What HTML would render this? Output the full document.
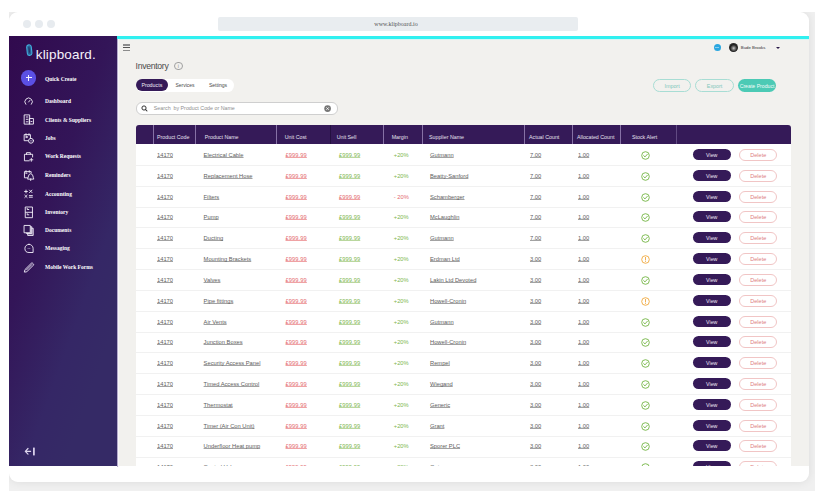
<!DOCTYPE html>
<html><head><meta charset="utf-8">
<style>
html,body{margin:0;padding:0;}
body{width:815px;height:491px;overflow:hidden;background:#fff;position:relative;font-family:"Liberation Sans",sans-serif;}
.win{position:absolute;left:9px;top:12px;width:800px;height:470px;background:#fff;border-radius:9px;overflow:hidden;}
.dot{position:absolute;top:7.6px;width:8px;height:8px;border-radius:50%;background:#e7ebef;}
.url{position:absolute;left:209px;top:5px;width:360px;height:13.8px;background:#e9edf0;border-radius:2px;font-family:"Liberation Serif",serif;font-size:6px;color:#555;text-align:center;line-height:14.6px;padding-right:4px;box-sizing:border-box;}
.side{position:absolute;left:0;top:24px;width:108px;height:430px;background:linear-gradient(110deg,#310a4e 0%,#331558 38%,#341d5e 50%,#352766 65%,#352a66 80%,#352a66 100%);}
.main{position:absolute;left:108px;top:24px;width:692px;height:430px;background:#f2f1ee;}
.cyan{position:absolute;left:0;top:0;width:692px;height:3px;background:#30f0f0;box-shadow:0 1px 0 #d2f8f6;}
.logo{position:absolute;left:26.8px;top:10.8px;font-size:13.5px;line-height:16px;color:#f6f2fb;letter-spacing:0.15px;}
.qc{position:absolute;left:11.8px;top:34.1px;width:15.6px;height:15.6px;border-radius:50%;background:#5b50e4;}
.qc:before{content:"";position:absolute;left:4.8px;top:7.35px;width:6px;height:0.9px;background:#f4f2ff;}
.qc:after{content:"";position:absolute;left:7.35px;top:4.8px;width:0.9px;height:6px;background:#f4f2ff;}
.sl{position:absolute;left:36px;height:10px;line-height:10px;font-family:"Liberation Serif",serif;font-weight:bold;font-size:5.5px;color:#fff;white-space:nowrap;}
.sic{position:absolute;left:15px;width:11px;height:11px;overflow:visible;}
.sic svg{overflow:visible;}
.sic svg{display:block;}
.abs{position:absolute;}
.thead{position:absolute;background:#351a58;border-radius:3px 3px 0 0;}
.hdiv{position:absolute;top:0;width:0.8px;height:100%;background:rgba(200,185,230,0.55);}
.hdiv.dark{background:rgba(20,5,40,0.5);}
.hdiv.mid{background:rgba(200,185,230,0.3);}
.thead .hdiv{}
.ht{position:absolute;font-size:5.3px;color:#e6e0ef;white-space:nowrap;}
.tbody{position:absolute;background:#fff;overflow:hidden;}
.row{position:absolute;left:0;width:100%;}
.rline{position:absolute;left:0;right:0;height:0.8px;background:#f1f1f1;}
.c{position:absolute;top:1px;height:100%;line-height:20.82px;font-size:5.75px;color:#5e5e5e;white-space:nowrap;}
.u{text-decoration:underline;text-decoration-skip-ink:none;text-decoration-thickness:0.5px;text-underline-offset:0.4px;text-decoration-color:rgba(70,70,70,0.5);}
.u.red,.u.sr{text-decoration-color:rgba(226,85,90,0.55);}
.u.sg{text-decoration-color:rgba(128,182,78,0.55);}
.red{color:#e46a6e;}
.sg{color:#80b64e;}
.sr{color:#e46a6e;}
.mg{color:#80b64e;}
.mr{color:#e46a6e;}
.ic{position:absolute;top:6.6px;width:9px;height:9px;}
.ic svg{display:block;}
.bview{position:absolute;top:4.9px;width:37.5px;height:11.6px;border-radius:6px;background:#351a58;color:#ece6f4;font-size:5.3px;line-height:12.4px;text-align:center;}
.bdel{position:absolute;top:4.7px;width:37.6px;height:12.2px;box-sizing:border-box;border-radius:6.1px;border:0.9px solid #f1c5c5;color:#dc7b80;font-size:5.5px;line-height:11px;text-align:center;background:#fff;padding-left:1px;}
</style></head><body>
<div class="abs" style="left:9px;top:12px;width:806px;height:479px;background:#f0f0f0;overflow:hidden"><div class="abs" style="left:0;top:0;width:800px;height:470px;border-radius:9px;box-shadow:0 0 10px rgba(0,0,0,0.085)"></div></div>
<div class="win">
  <div class="dot" style="left:14px"></div>
  <div class="dot" style="left:26px"></div>
  <div class="dot" style="left:38px"></div>
  <div class="url">www.klipboard.io</div>
  <div class="side">
    <svg class="abs" style="left:16.5px;top:8px" width="7" height="12" viewBox="0 0 7 12"><rect x="1" y="0.8" width="4.6" height="10.6" rx="2.3" transform="rotate(-6 3.3 6)" fill="#2a5f96" stroke="#42aedb" stroke-width="1.1"/><path d="M3.2 3.2 V8.6" stroke="#1e2a60" stroke-width="0.9" transform="rotate(-6 3.3 6)"/></svg>
    <div class="logo">klipboard.</div>
    <div class="qc"></div>
    <div class="sl" style="top:37.8px">Quick Create</div>
<div class="sic" style="top:59.5px"><svg width="11" height="11" viewBox="0 0 22 22" fill="none" stroke="#f4f0fa" stroke-width="1.8" stroke-linecap="round" stroke-linejoin="round"><path d="M3.6 16.6 A7.5 7.5 0 1 1 14.8 16.6"/><path d="M9.2 12 L11.8 8.8"/></svg></div>
<div class="sl" style="top:60.0px">Dashboard</div>
<div class="sic" style="top:78.3px"><svg width="11" height="11" viewBox="0 0 22 22" fill="none" stroke="#f4f0fa" stroke-width="1.8" stroke-linecap="round" stroke-linejoin="round"><rect x="1.1" y="1.8" width="10.2" height="18.4"/><rect x="11.3" y="9" width="7.6" height="11.2"/><path d="M4.5 6h3.4M4.5 10.6h3.4M4.5 15.6h3.4M14 15h2"/></svg></div>
<div class="sl" style="top:78.8px">Clients &amp; Suppliers</div>
<div class="sic" style="top:96.69999999999999px"><svg width="11" height="11" viewBox="0 0 22 22" fill="none" stroke="#f4f0fa" stroke-width="1.8" stroke-linecap="round" stroke-linejoin="round"><rect x="1.1" y="3.2" width="11.8" height="12.2"/><path d="M4 1.4v3.2M10 1.4v3.2"/><path d="M3.8 6.3h3.4v3.2H3.8z" fill="#f4f0fa" stroke-width="0.6"/><circle cx="14" cy="15.6" r="4.9" fill="#321657"/><circle cx="14" cy="15.6" r="1.3" fill="#f4f0fa" stroke="none"/></svg></div>
<div class="sl" style="top:97.19999999999999px">Jobs</div>
<div class="sic" style="top:114.5px"><svg width="11" height="11" viewBox="0 0 22 22" fill="none" stroke="#f4f0fa" stroke-width="1.8" stroke-linecap="round" stroke-linejoin="round"><path d="M10.5 19.6H0.9V6.6H17.2V12"/><path d="M5 6.6V3.3h7.6v3.3"/><path d="M14.6 14.6v6M11.6 17.6h6"/></svg></div>
<div class="sl" style="top:115.0px">Work Requests</div>
<div class="sic" style="top:133.5px"><svg width="11" height="11" viewBox="0 0 22 22" fill="none" stroke="#f4f0fa" stroke-width="1.8" stroke-linecap="round" stroke-linejoin="round"><path d="M7 15.6H0.9V3.2h13.4v2.5"/><path d="M4 1.4v3.2M10.5 1.4v3.2M3.5 6.5h2.5"/><path d="M7.6 17.6 C8.8 15.8 8.2 7.4 13.4 7.4 C18.6 7.4 18 15.8 19.2 17.6 Z" fill="#321657"/><path d="M13.4 17.6v3.4"/></svg></div>
<div class="sl" style="top:134.0px">Reminders</div>
<div class="sic" style="top:152.5px"><svg width="11" height="11" viewBox="0 0 22 22" fill="none" stroke="#f4f0fa" stroke-width="1.8" stroke-linecap="round" stroke-linejoin="round"><path d="M1.2 5h5.6M4 2.2v5.6M11 2.2l5 5M16 2.2l-5 5M1.6 12.4l4.6 4.6M6.2 12.4l-4.6 4.6M10.6 13.2h6.2M10.6 16.4h6.2"/></svg></div>
<div class="sl" style="top:153.0px">Accounting</div>
<div class="sic" style="top:170.5px"><svg width="11" height="11" viewBox="0 0 22 22" fill="none" stroke="#f4f0fa" stroke-width="1.8" stroke-linecap="round" stroke-linejoin="round"><rect x="3.3" y="0" width="13.6" height="21.4"/><path d="M3.3 10.6h13.6M6.4 2.8v2.2h3.2M6.4 13.4v2.2h3.2"/></svg></div>
<div class="sl" style="top:171.0px">Inventory</div>
<div class="sic" style="top:188.5px"><svg width="11" height="11" viewBox="0 0 22 22" fill="none" stroke="#f4f0fa" stroke-width="1.8" stroke-linecap="round" stroke-linejoin="round"><path d="M12.8 3.5h2.8v13.4H4.6v-1.8" fill="rgba(244,240,250,0.35)"/><path d="M15.6 6.5h2.8v14.4H7.4v-4" fill="rgba(244,240,250,0.3)"/><rect x="0.9" y="0.9" width="11.6" height="14.6" fill="#321657"/></svg></div>
<div class="sl" style="top:189.0px">Documents</div>
<div class="sic" style="top:206.5px"><svg width="11" height="11" viewBox="0 0 22 22" fill="none" stroke="#f4f0fa" stroke-width="1.8" stroke-linecap="round" stroke-linejoin="round"><path d="M10 2.6 A8.2 8.2 0 1 0 10 19 L18.2 19 L18.2 10.8 A8.2 8.2 0 0 0 10 2.6 Z"/><path d="M8.2 11h.05M11.6 11h.05" stroke-width="1.3"/></svg></div>
<div class="sl" style="top:207.0px">Messaging</div>
<div class="sic" style="top:225.5px"><svg width="11" height="11" viewBox="0 0 22 22" fill="none" stroke="#f4f0fa" stroke-width="1.8" stroke-linecap="round" stroke-linejoin="round"><path d="M0.8 19.4 L1.9 15.2 L14.6 2.5 A2 2 0 0 1 17.4 2.5 L18.6 3.7 A2 2 0 0 1 18.6 6.5 L5.9 19.2 Z"/><path d="M5 15.8 L15.8 5"/></svg></div>
<div class="sl" style="top:226.0px">Mobile Work Forms</div>
    <svg class="abs" style="left:14.8px;top:410.8px" width="12" height="10" viewBox="0 0 12 10"><path d="M4 1.5 L1.3 4.3 L4 7.1 M1.5 4.3 H6.6" fill="none" stroke="#ddd5ee" stroke-width="1.2" stroke-linecap="round" stroke-linejoin="round"/><rect x="9" y="0.6" width="1.8" height="7.8" fill="#d6cde8"/></svg>
  </div>
  <div class="main">
    <div class="cyan"></div>
    <div class="abs" style="left:0;top:2.6px;width:1px;height:428px;background:#b4aacb"></div><div class="abs" style="left:1px;top:2.6px;width:1px;height:428px;background:#f7f6f9"></div>
  </div>
</div>
<!-- main content, absolute page coords -->
<div class="abs" style="left:122.8px;top:44.3px;width:7.4px;height:1.4px;background:#8c8c8c"></div>
<div class="abs" style="left:122.8px;top:47.1px;width:7.4px;height:1px;background:#555"></div>
<div class="abs" style="left:122.8px;top:49.5px;width:7.4px;height:1.4px;background:#8c8c8c"></div>

<div class="abs" style="left:135.6px;top:60px;font-size:8.7px;color:#4a4a4a;line-height:12px;letter-spacing:-0.32px">Inventory</div>
<div class="abs" style="left:174.2px;top:61.7px;width:6.4px;height:6.4px;border:0.7px solid #a0a0a0;border-radius:50%;font-size:5px;line-height:6px;text-align:center;color:#888">i</div>

<div class="abs" style="left:135.7px;top:78.9px;width:98.5px;height:12.8px;background:#fff;border-radius:6.4px"></div>
<div class="abs" style="left:135.7px;top:78.7px;width:32.3px;height:12.8px;background:#351a58;border-radius:6.4px;color:#f0ecf6;font-size:5.3px;line-height:13.4px;text-align:center">Products</div>
<div class="abs" style="left:175.5px;top:79px;font-size:4.95px;line-height:13.2px;color:#4a4a4a">Services</div>
<div class="abs" style="left:208.9px;top:79px;font-size:5.05px;line-height:13.2px;color:#4a4a4a">Settings</div>

<div class="abs" style="left:135.9px;top:102.2px;width:202px;height:12.9px;box-sizing:border-box;border:0.8px solid #cfcfcf;border-radius:6px;background:#fff"></div>
<svg class="abs" style="left:141.2px;top:105px" width="7" height="7" viewBox="0 0 14 14"><circle cx="6" cy="6" r="4.2" fill="none" stroke="#2a2a2a" stroke-width="1.9"/><path d="M9.2 9.2 L12 12" stroke="#2a2a2a" stroke-width="2.1" stroke-linecap="round"/></svg>
<div class="abs" style="left:153.8px;top:102.9px;font-size:5.3px;line-height:11.8px;color:#8e8e8e;white-space:nowrap">Search&nbsp; by Product Code or Name</div>
<svg class="abs" style="left:324px;top:104.9px" width="7.2" height="7.2" viewBox="0 0 14 14"><circle cx="7" cy="7" r="6.5" fill="#777"/><path d="M4.6 4.6 L9.4 9.4 M9.4 4.6 L4.6 9.4" stroke="#fff" stroke-width="1.6"/></svg>

<div class="abs" style="left:713.5px;top:43.7px;width:7.4px;height:7.4px;border-radius:50%;background:#2aa7e0"></div><div class="abs" style="left:715.4px;top:46.9px;width:3.6px;height:0.8px;background:rgba(255,255,255,0.45)"></div>
<div class="abs" style="left:729px;top:43.1px;width:8.8px;height:8.8px;border-radius:50%;background:radial-gradient(circle at 52% 58%,#ccc 0,#777 22%,#1e1e1e 50%,#3a3a3a 80%,#777 100%)"></div>
<div class="abs" style="left:740.8px;top:45.3px;font-size:4.3px;line-height:6px;color:#2e2e2e;white-space:nowrap">Bude Brooks</div>
<div class="abs" style="left:776px;top:46.8px;width:0;height:0;border-left:2.2px solid transparent;border-right:2.2px solid transparent;border-top:2.8px solid #2a1a48"></div>

<div class="abs" style="left:652.7px;top:79.3px;width:38.7px;height:12.4px;box-sizing:border-box;border:0.8px solid #a8ddd4;border-radius:6.5px;color:#7fc7bb;font-size:5.4px;line-height:12px;text-align:center">Import</div>
<div class="abs" style="left:695.2px;top:79.3px;width:38.8px;height:12.4px;box-sizing:border-box;border:0.8px solid #a8ddd4;border-radius:6.5px;color:#7fc7bb;font-size:5.4px;line-height:12px;text-align:center">Export</div>
<div class="abs" style="left:737.8px;top:79.3px;width:38.6px;height:12.4px;border-radius:6.5px;background:#4ccab5;color:#f2fbf9;font-size:5.2px;line-height:14.2px;text-align:center;white-space:nowrap">Create Product</div>

<div class="thead" style="left:136.0px;top:125.0px;width:654.8px;height:19.0px">
<div class="hdiv" style="left:17.19999999999999px"></div>
<div class="hdiv" style="left:59.400000000000006px"></div>
<div class="hdiv" style="left:140.2px"></div>
<div class="hdiv dark" style="left:193.60000000000002px"></div>
<div class="hdiv" style="left:247.2px"></div>
<div class="hdiv" style="left:285.8px"></div>
<div class="hdiv" style="left:388.29999999999995px"></div>
<div class="hdiv" style="left:436.29999999999995px"></div>
<div class="hdiv" style="left:484.1px"></div>
<div class="hdiv mid" style="left:540.4px"></div>
</div>
<div class="ht" style="left:157.0px;top:127.8px;height:19.0px;line-height:19.0px">Product Code</div>
<div class="ht" style="left:204.7px;top:127.8px;height:19.0px;line-height:19.0px">Product Name</div>
<div class="ht" style="left:284.8px;top:127.8px;height:19.0px;line-height:19.0px">Unit Cost</div>
<div class="ht" style="left:336.7px;top:127.8px;height:19.0px;line-height:19.0px">Unit Sell</div>
<div class="ht" style="left:391.7px;top:127.8px;height:19.0px;line-height:19.0px">Margin</div>
<div class="ht" style="left:429.0px;top:127.8px;height:19.0px;line-height:19.0px">Supplier Name</div>
<div class="ht" style="left:529.0px;top:127.8px;height:19.0px;line-height:19.0px">Actual Count</div>
<div class="ht" style="left:577.0px;top:127.8px;height:19.0px;line-height:19.0px">Allocated Count</div>
<div class="ht" style="left:632.0px;top:127.8px;height:19.0px;line-height:19.0px">Stock Alert</div>
<div class="tbody" style="left:136.0px;top:144.0px;width:654.8px;height:322.0px">
<div class="rline" style="top:21.02px"></div>
<div class="row" style="top:0px;height:20.82px"><span class="c u" style="left:21.0px">14170</span><span class="c u" style="left:67.6px">Electrical Cable</span><span class="c u red" style="left:149.5px;letter-spacing:0.08px">&pound;999.99</span><span class="c u sg" style="left:202.89999999999998px;letter-spacing:0.08px">&pound;999.99</span><span class="c mg" style="left:257.8px">+20%</span><span class="c u" style="left:294.0px">Gutmann</span><span class="c u" style="left:394.0px">7.00</span><span class="c u" style="left:442.0px">1.00</span><span class="ic" style="left:505.0px"><svg width="9" height="9" viewBox="0 0 18 18"><circle cx="9" cy="9" r="7.6" fill="none" stroke="#74b544" stroke-width="1.8"/><path d="M5.3 9.2 L8 11.8 L12.8 6.4" fill="none" stroke="#74b544" stroke-width="1.8" stroke-linecap="round" stroke-linejoin="round"/></svg></span><span class="bview" style="left:557.0px">View</span><span class="bdel" style="left:603.0px">Delete</span></div>
<div class="rline" style="top:41.84px"></div>
<div class="row" style="top:21px;height:20.82px"><span class="c u" style="left:21.0px">14170</span><span class="c u" style="left:67.6px">Replacement Hose</span><span class="c u red" style="left:149.5px;letter-spacing:0.08px">&pound;999.99</span><span class="c u sg" style="left:202.89999999999998px;letter-spacing:0.08px">&pound;999.99</span><span class="c mg" style="left:257.8px">+20%</span><span class="c u" style="left:294.0px">Beatty-Sanford</span><span class="c u" style="left:394.0px">7.00</span><span class="c u" style="left:442.0px">1.00</span><span class="ic" style="left:505.0px"><svg width="9" height="9" viewBox="0 0 18 18"><circle cx="9" cy="9" r="7.6" fill="none" stroke="#74b544" stroke-width="1.8"/><path d="M5.3 9.2 L8 11.8 L12.8 6.4" fill="none" stroke="#74b544" stroke-width="1.8" stroke-linecap="round" stroke-linejoin="round"/></svg></span><span class="bview" style="left:557.0px">View</span><span class="bdel" style="left:603.0px">Delete</span></div>
<div class="rline" style="top:62.66px"></div>
<div class="row" style="top:42px;height:20.82px"><span class="c u" style="left:21.0px">14170</span><span class="c u" style="left:67.6px">Filters</span><span class="c u red" style="left:149.5px;letter-spacing:0.08px">&pound;999.99</span><span class="c u sr" style="left:202.89999999999998px;letter-spacing:0.08px">&pound;999.99</span><span class="c mr" style="left:257.8px">- 20%</span><span class="c u" style="left:294.0px">Schamberger</span><span class="c u" style="left:394.0px">7.00</span><span class="c u" style="left:442.0px">1.00</span><span class="ic" style="left:505.0px"><svg width="9" height="9" viewBox="0 0 18 18"><circle cx="9" cy="9" r="7.6" fill="none" stroke="#74b544" stroke-width="1.8"/><path d="M5.3 9.2 L8 11.8 L12.8 6.4" fill="none" stroke="#74b544" stroke-width="1.8" stroke-linecap="round" stroke-linejoin="round"/></svg></span><span class="bview" style="left:557.0px">View</span><span class="bdel" style="left:603.0px">Delete</span></div>
<div class="rline" style="top:83.48px"></div>
<div class="row" style="top:62px;height:20.82px"><span class="c u" style="left:21.0px">14170</span><span class="c u" style="left:67.6px">Pump</span><span class="c u red" style="left:149.5px;letter-spacing:0.08px">&pound;999.99</span><span class="c u sg" style="left:202.89999999999998px;letter-spacing:0.08px">&pound;999.99</span><span class="c mg" style="left:257.8px">+20%</span><span class="c u" style="left:294.0px">McLaughlin</span><span class="c u" style="left:394.0px">7.00</span><span class="c u" style="left:442.0px">1.00</span><span class="ic" style="left:505.0px"><svg width="9" height="9" viewBox="0 0 18 18"><circle cx="9" cy="9" r="7.6" fill="none" stroke="#74b544" stroke-width="1.8"/><path d="M5.3 9.2 L8 11.8 L12.8 6.4" fill="none" stroke="#74b544" stroke-width="1.8" stroke-linecap="round" stroke-linejoin="round"/></svg></span><span class="bview" style="left:557.0px">View</span><span class="bdel" style="left:603.0px">Delete</span></div>
<div class="rline" style="top:104.30px"></div>
<div class="row" style="top:83px;height:20.82px"><span class="c u" style="left:21.0px">14170</span><span class="c u" style="left:67.6px">Ducting</span><span class="c u red" style="left:149.5px;letter-spacing:0.08px">&pound;999.99</span><span class="c u sg" style="left:202.89999999999998px;letter-spacing:0.08px">&pound;999.99</span><span class="c mg" style="left:257.8px">+20%</span><span class="c u" style="left:294.0px">Gutmann</span><span class="c u" style="left:394.0px">7.00</span><span class="c u" style="left:442.0px">1.00</span><span class="ic" style="left:505.0px"><svg width="9" height="9" viewBox="0 0 18 18"><circle cx="9" cy="9" r="7.6" fill="none" stroke="#74b544" stroke-width="1.8"/><path d="M5.3 9.2 L8 11.8 L12.8 6.4" fill="none" stroke="#74b544" stroke-width="1.8" stroke-linecap="round" stroke-linejoin="round"/></svg></span><span class="bview" style="left:557.0px">View</span><span class="bdel" style="left:603.0px">Delete</span></div>
<div class="rline" style="top:125.12px"></div>
<div class="row" style="top:104px;height:20.82px"><span class="c u" style="left:21.0px">14170</span><span class="c u" style="left:67.6px">Mounting Brackets</span><span class="c u red" style="left:149.5px;letter-spacing:0.08px">&pound;999.99</span><span class="c u sg" style="left:202.89999999999998px;letter-spacing:0.08px">&pound;999.99</span><span class="c mg" style="left:257.8px">+20%</span><span class="c u" style="left:294.0px">Erdman Ltd</span><span class="c u" style="left:394.0px">3.00</span><span class="c u" style="left:442.0px">1.00</span><span class="ic" style="left:505.0px"><svg width="9" height="9" viewBox="0 0 18 18"><circle cx="9" cy="9" r="7.6" fill="none" stroke="#f0a83c" stroke-width="1.8"/><path d="M9 4.8 V10" fill="none" stroke="#f0a83c" stroke-width="1.8" stroke-linecap="round"/><circle cx="9" cy="12.8" r="1" fill="#f0a83c"/></svg></span><span class="bview" style="left:557.0px">View</span><span class="bdel" style="left:603.0px">Delete</span></div>
<div class="rline" style="top:145.94px"></div>
<div class="row" style="top:125px;height:20.82px"><span class="c u" style="left:21.0px">14170</span><span class="c u" style="left:67.6px">Valves</span><span class="c u red" style="left:149.5px;letter-spacing:0.08px">&pound;999.99</span><span class="c u sg" style="left:202.89999999999998px;letter-spacing:0.08px">&pound;999.99</span><span class="c mg" style="left:257.8px">+20%</span><span class="c u" style="left:294.0px">Lakin Ltd Devoted</span><span class="c u" style="left:394.0px">3.00</span><span class="c u" style="left:442.0px">1.00</span><span class="ic" style="left:505.0px"><svg width="9" height="9" viewBox="0 0 18 18"><circle cx="9" cy="9" r="7.6" fill="none" stroke="#74b544" stroke-width="1.8"/><path d="M5.3 9.2 L8 11.8 L12.8 6.4" fill="none" stroke="#74b544" stroke-width="1.8" stroke-linecap="round" stroke-linejoin="round"/></svg></span><span class="bview" style="left:557.0px">View</span><span class="bdel" style="left:603.0px">Delete</span></div>
<div class="rline" style="top:166.76px"></div>
<div class="row" style="top:146px;height:20.82px"><span class="c u" style="left:21.0px">14170</span><span class="c u" style="left:67.6px">Pipe fittings</span><span class="c u red" style="left:149.5px;letter-spacing:0.08px">&pound;999.99</span><span class="c u sg" style="left:202.89999999999998px;letter-spacing:0.08px">&pound;999.99</span><span class="c mg" style="left:257.8px">+20%</span><span class="c u" style="left:294.0px">Howell-Cronin</span><span class="c u" style="left:394.0px">3.00</span><span class="c u" style="left:442.0px">1.00</span><span class="ic" style="left:505.0px"><svg width="9" height="9" viewBox="0 0 18 18"><circle cx="9" cy="9" r="7.6" fill="none" stroke="#f0a83c" stroke-width="1.8"/><path d="M9 4.8 V10" fill="none" stroke="#f0a83c" stroke-width="1.8" stroke-linecap="round"/><circle cx="9" cy="12.8" r="1" fill="#f0a83c"/></svg></span><span class="bview" style="left:557.0px">View</span><span class="bdel" style="left:603.0px">Delete</span></div>
<div class="rline" style="top:187.58px"></div>
<div class="row" style="top:167px;height:20.82px"><span class="c u" style="left:21.0px">14170</span><span class="c u" style="left:67.6px">Air Vents</span><span class="c u red" style="left:149.5px;letter-spacing:0.08px">&pound;999.99</span><span class="c u sg" style="left:202.89999999999998px;letter-spacing:0.08px">&pound;999.99</span><span class="c mg" style="left:257.8px">+20%</span><span class="c u" style="left:294.0px">Gutmann</span><span class="c u" style="left:394.0px">3.00</span><span class="c u" style="left:442.0px">1.00</span><span class="ic" style="left:505.0px"><svg width="9" height="9" viewBox="0 0 18 18"><circle cx="9" cy="9" r="7.6" fill="none" stroke="#74b544" stroke-width="1.8"/><path d="M5.3 9.2 L8 11.8 L12.8 6.4" fill="none" stroke="#74b544" stroke-width="1.8" stroke-linecap="round" stroke-linejoin="round"/></svg></span><span class="bview" style="left:557.0px">View</span><span class="bdel" style="left:603.0px">Delete</span></div>
<div class="rline" style="top:208.40px"></div>
<div class="row" style="top:187px;height:20.82px"><span class="c u" style="left:21.0px">14170</span><span class="c u" style="left:67.6px">Junction Boxes</span><span class="c u red" style="left:149.5px;letter-spacing:0.08px">&pound;999.99</span><span class="c u sg" style="left:202.89999999999998px;letter-spacing:0.08px">&pound;999.99</span><span class="c mg" style="left:257.8px">+20%</span><span class="c u" style="left:294.0px">Howell-Cronin</span><span class="c u" style="left:394.0px">3.00</span><span class="c u" style="left:442.0px">1.00</span><span class="ic" style="left:505.0px"><svg width="9" height="9" viewBox="0 0 18 18"><circle cx="9" cy="9" r="7.6" fill="none" stroke="#74b544" stroke-width="1.8"/><path d="M5.3 9.2 L8 11.8 L12.8 6.4" fill="none" stroke="#74b544" stroke-width="1.8" stroke-linecap="round" stroke-linejoin="round"/></svg></span><span class="bview" style="left:557.0px">View</span><span class="bdel" style="left:603.0px">Delete</span></div>
<div class="rline" style="top:229.22px"></div>
<div class="row" style="top:208px;height:20.82px"><span class="c u" style="left:21.0px">14170</span><span class="c u" style="left:67.6px">Security Access Panel</span><span class="c u red" style="left:149.5px;letter-spacing:0.08px">&pound;999.99</span><span class="c u sg" style="left:202.89999999999998px;letter-spacing:0.08px">&pound;999.99</span><span class="c mg" style="left:257.8px">+20%</span><span class="c u" style="left:294.0px">Rempel</span><span class="c u" style="left:394.0px">3.00</span><span class="c u" style="left:442.0px">1.00</span><span class="ic" style="left:505.0px"><svg width="9" height="9" viewBox="0 0 18 18"><circle cx="9" cy="9" r="7.6" fill="none" stroke="#74b544" stroke-width="1.8"/><path d="M5.3 9.2 L8 11.8 L12.8 6.4" fill="none" stroke="#74b544" stroke-width="1.8" stroke-linecap="round" stroke-linejoin="round"/></svg></span><span class="bview" style="left:557.0px">View</span><span class="bdel" style="left:603.0px">Delete</span></div>
<div class="rline" style="top:250.04px"></div>
<div class="row" style="top:229px;height:20.82px"><span class="c u" style="left:21.0px">14170</span><span class="c u" style="left:67.6px">Timed Access Control</span><span class="c u red" style="left:149.5px;letter-spacing:0.08px">&pound;999.99</span><span class="c u sg" style="left:202.89999999999998px;letter-spacing:0.08px">&pound;999.99</span><span class="c mg" style="left:257.8px">+20%</span><span class="c u" style="left:294.0px">Wiegand</span><span class="c u" style="left:394.0px">3.00</span><span class="c u" style="left:442.0px">1.00</span><span class="ic" style="left:505.0px"><svg width="9" height="9" viewBox="0 0 18 18"><circle cx="9" cy="9" r="7.6" fill="none" stroke="#74b544" stroke-width="1.8"/><path d="M5.3 9.2 L8 11.8 L12.8 6.4" fill="none" stroke="#74b544" stroke-width="1.8" stroke-linecap="round" stroke-linejoin="round"/></svg></span><span class="bview" style="left:557.0px">View</span><span class="bdel" style="left:603.0px">Delete</span></div>
<div class="rline" style="top:270.86px"></div>
<div class="row" style="top:250px;height:20.82px"><span class="c u" style="left:21.0px">14170</span><span class="c u" style="left:67.6px">Thermostat</span><span class="c u red" style="left:149.5px;letter-spacing:0.08px">&pound;999.99</span><span class="c u sg" style="left:202.89999999999998px;letter-spacing:0.08px">&pound;999.99</span><span class="c mg" style="left:257.8px">+20%</span><span class="c u" style="left:294.0px">Generic</span><span class="c u" style="left:394.0px">3.00</span><span class="c u" style="left:442.0px">1.00</span><span class="ic" style="left:505.0px"><svg width="9" height="9" viewBox="0 0 18 18"><circle cx="9" cy="9" r="7.6" fill="none" stroke="#74b544" stroke-width="1.8"/><path d="M5.3 9.2 L8 11.8 L12.8 6.4" fill="none" stroke="#74b544" stroke-width="1.8" stroke-linecap="round" stroke-linejoin="round"/></svg></span><span class="bview" style="left:557.0px">View</span><span class="bdel" style="left:603.0px">Delete</span></div>
<div class="rline" style="top:291.68px"></div>
<div class="row" style="top:271px;height:20.82px"><span class="c u" style="left:21.0px">14170</span><span class="c u" style="left:67.6px">Timer (Air Con Unit)</span><span class="c u red" style="left:149.5px;letter-spacing:0.08px">&pound;999.99</span><span class="c u sg" style="left:202.89999999999998px;letter-spacing:0.08px">&pound;999.99</span><span class="c mg" style="left:257.8px">+20%</span><span class="c u" style="left:294.0px">Grant</span><span class="c u" style="left:394.0px">3.00</span><span class="c u" style="left:442.0px">1.00</span><span class="ic" style="left:505.0px"><svg width="9" height="9" viewBox="0 0 18 18"><circle cx="9" cy="9" r="7.6" fill="none" stroke="#74b544" stroke-width="1.8"/><path d="M5.3 9.2 L8 11.8 L12.8 6.4" fill="none" stroke="#74b544" stroke-width="1.8" stroke-linecap="round" stroke-linejoin="round"/></svg></span><span class="bview" style="left:557.0px">View</span><span class="bdel" style="left:603.0px">Delete</span></div>
<div class="rline" style="top:312.50px"></div>
<div class="row" style="top:291px;height:20.82px"><span class="c u" style="left:21.0px">14170</span><span class="c u" style="left:67.6px">Underfloor Heat pump</span><span class="c u red" style="left:149.5px;letter-spacing:0.08px">&pound;999.99</span><span class="c u sg" style="left:202.89999999999998px;letter-spacing:0.08px">&pound;999.99</span><span class="c mg" style="left:257.8px">+20%</span><span class="c u" style="left:294.0px">Sporer PLC</span><span class="c u" style="left:394.0px">3.00</span><span class="c u" style="left:442.0px">1.00</span><span class="ic" style="left:505.0px"><svg width="9" height="9" viewBox="0 0 18 18"><circle cx="9" cy="9" r="7.6" fill="none" stroke="#74b544" stroke-width="1.8"/><path d="M5.3 9.2 L8 11.8 L12.8 6.4" fill="none" stroke="#74b544" stroke-width="1.8" stroke-linecap="round" stroke-linejoin="round"/></svg></span><span class="bview" style="left:557.0px">View</span><span class="bdel" style="left:603.0px">Delete</span></div>
<div class="rline" style="top:333.32px"></div>
<div class="row" style="top:312px;height:20.82px"><span class="c u" style="left:21.0px">14170</span><span class="c u" style="left:67.6px">Control Valve</span><span class="c u red" style="left:149.5px;letter-spacing:0.08px">&pound;999.99</span><span class="c u sg" style="left:202.89999999999998px;letter-spacing:0.08px">&pound;999.99</span><span class="c mg" style="left:257.8px">+20%</span><span class="c u" style="left:294.0px">Gutmann</span><span class="c u" style="left:394.0px">3.00</span><span class="c u" style="left:442.0px">1.00</span><span class="ic" style="left:505.0px"><svg width="9" height="9" viewBox="0 0 18 18"><circle cx="9" cy="9" r="7.6" fill="none" stroke="#74b544" stroke-width="1.8"/><path d="M5.3 9.2 L8 11.8 L12.8 6.4" fill="none" stroke="#74b544" stroke-width="1.8" stroke-linecap="round" stroke-linejoin="round"/></svg></span><span class="bview" style="left:557.0px">View</span><span class="bdel" style="left:603.0px">Delete</span></div>
</div>
</body></html>
